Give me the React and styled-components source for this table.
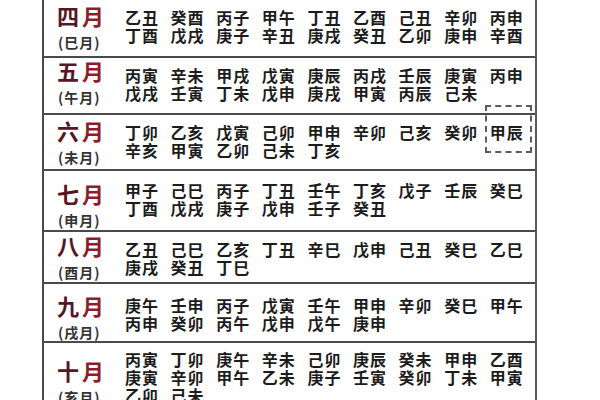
import styled, { createGlobalStyle } from "styled-components";

const GlobalStyle = createGlobalStyle`
  html, body {
    margin: 0;
    padding: 0;
    background: #fff;
  }
  body {
    width: 600px;
    height: 400px;
    overflow: hidden;
    font-family: "Noto Sans CJK SC", "Noto Sans CJK TC", sans-serif;
  }
`;

const Page = styled.div`
  padding-left: 42px;
  width: 600px;
  height: 400px;
  box-sizing: border-box;
`;

const Table = styled.div`
  width: 495px;
  border-left: 2px solid #4a4a4a;
  border-right: 2px solid #5a5a5a;
  box-sizing: border-box;
`;

const Row = styled.div`
  display: grid;
  grid-template-columns: 81px 1fr;
  height: ${(p) => p.$h}px;
  box-sizing: border-box;
  border-top: ${(p) => (p.$first ? "none" : "2px solid #4a4a4a")};
`;

const Label = styled.div`
  padding-left: 13px;
  padding-top: ${(p) => p.$top}px;
  display: flex;
  flex-direction: column;
`;

const Big = styled.div`
  font-size: 22px;
  line-height: 24px;
  font-weight: 700;
  letter-spacing: 3px;
  white-space: nowrap;
`;

const Num = styled.span`
  color: #561723;
`;

const Moon = styled.span`
  color: #8f1b2f;
`;

const Small = styled.div`
  margin-top: 7px;
  padding-left: 1px;
  font-size: 14px;
  line-height: 16px;
  font-weight: 700;
  color: #333;
  letter-spacing: 1px;
  white-space: nowrap;
`;

const Data = styled.div`
  padding-top: ${(p) => p.$top}px;
  display: flex;
  flex-direction: column;
`;

const Line = styled.div`
  display: grid;
  grid-template-columns: repeat(9, 45.6px);
  height: 18px;
`;

const Pair = styled.span`
  position: relative;
  font-size: 16px;
  line-height: 18px;
  font-weight: 700;
  color: #1c1c1c;
  letter-spacing: 1px;
  white-space: nowrap;

  ${(p) =>
    p.$boxed &&
    `
    &::after {
      content: "";
      position: absolute;
      left: -5px;
      top: -18px;
      width: 47px;
      height: 48px;
      border: 2px dashed #5c5c5c;
      box-sizing: border-box;
    }
  `}
`;

const months = [
  {
    num: "四", branch: "巳", h: 56, label: 3, top: 8, first: true,
    lines: [
      "乙丑 癸酉 丙子 甲午 丁丑 乙酉 己丑 辛卯 丙申",
      "丁酉 戊戌 庚子 辛丑 庚戌 癸丑 乙卯 庚申 辛酉",
    ],
  },
  {
    num: "五", branch: "午", h: 57, label: 0, top: 8,
    lines: [
      "丙寅 辛未 甲戌 戊寅 庚辰 丙戌 壬辰 庚寅 丙申",
      "戊戌 壬寅 丁未 戊申 庚戌 甲寅 丙辰 己未",
    ],
  },
  {
    num: "六", branch: "未", h: 56, label: 3, top: 8, boxed: [0, 8],
    lines: [
      "丁卯 乙亥 戊寅 己卯 甲申 辛卯 己亥 癸卯 甲辰",
      "辛亥 甲寅 乙卯 己未 丁亥",
    ],
  },
  {
    num: "七", branch: "申", h: 61, label: 10, top: 10,
    lines: [
      "甲子 己巳 丙子 丁丑 壬午 丁亥 戊子 壬辰 癸巳",
      "丁酉 戊戌 庚子 戊申 壬子 癸丑",
    ],
  },
  {
    num: "八", branch: "酉", h: 52, label: 1, top: 8,
    lines: [
      "乙丑 己巳 乙亥 丁丑 辛巳 戊申 己丑 癸巳 乙巳",
      "庚戌 癸丑 丁巳",
    ],
  },
  {
    num: "九", branch: "戌", h: 59, label: 9, top: 12,
    lines: [
      "庚午 壬申 丙子 戊寅 壬午 甲申 辛卯 癸巳 甲午",
      "丙申 癸卯 丙午 戊申 戊午 庚申",
    ],
  },
  {
    num: "十", branch: "亥", h: 80, label: 15, top: 7,
    lines: [
      "丙寅 丁卯 庚午 辛未 己卯 庚辰 癸未 甲申 乙酉",
      "庚寅 辛卯 甲午 乙未 庚子 壬寅 癸卯 丁未 甲寅",
      "乙卯 己未",
    ],
  },
];

function MonthRow({ m }) {
  return (
    <Row $h={m.h} $first={m.first}>
      <Label $top={m.label}>
        <Big>
          <Num>{m.num}</Num>
          <Moon>月</Moon>
        </Big>
        <Small>({m.branch}月)</Small>
      </Label>
      <Data $top={m.top}>
        {m.lines.map((line, li) => (
          <Line key={li}>
            {line.split(" ").map((p, pi) => (
              <Pair
                key={pi}
                $boxed={m.boxed && m.boxed[0] === li && m.boxed[1] === pi}
              >
                {p}
              </Pair>
            ))}
          </Line>
        ))}
      </Data>
    </Row>
  );
}

export default function App() {
  return (
    <>
      <GlobalStyle />
      <Page>
        <Table>
          {months.map((m) => (
            <MonthRow key={m.num} m={m} />
          ))}
        </Table>
      </Page>
    </>
  );
}
